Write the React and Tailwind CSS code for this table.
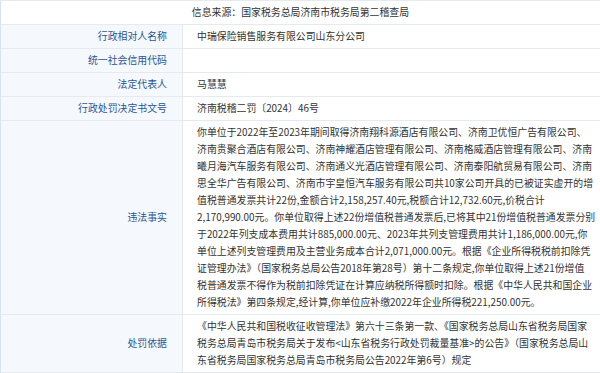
import React from 'react';

const facts = [
  '你单位于2022年至2023年期间取得济南翔科源酒店有限公司、济南卫优恒广告有限公司、',
  '济南贵聚合酒店有限公司、济南神耀酒店管理有限公司、济南格威酒店管理有限公司、济南',
  '曦月海汽车服务有限公司、济南通义光酒店管理有限公司、济南泰阳航贸易有限公司、济南',
  '思全华广告有限公司、济南市宇皇恒汽车服务有限公司共10家公司开具的已被证实虚开的增',
  '值税普通发票共计22份,金额合计2,158,257.40元,税额合计12,732.60元,价税合计',
  '2,170,990.00元。你单位取得上述22份增值税普通发票后,已将其中21份增值税普通发票分别',
  '于2022年列支成本费用共计885,000.00元、2023年共列支管理费用共计1,186,000.00元,你',
  '单位上述列支管理费用及主营业务成本合计2,071,000.00元。根据《企业所得税税前扣除凭',
  '证管理办法》（国家税务总局公告2018年第28号）第十二条规定,你单位取得上述21份增值',
  '税普通发票不得作为税前扣除凭证在计算应纳税所得额时扣除。根据《中华人民共和国企业',
  '所得税法》第四条规定,经计算,你单位应补缴2022年企业所得税221,250.00元。',
];

const basis = [
  '《中华人民共和国税收征收管理法》第六十三条第一款、《国家税务总局山东省税务局国家',
  '税务总局青岛市税务局关于发布<山东省税务行政处罚裁量基准>的公告》（国家税务总局山',
  '东省税务局国家税务总局青岛市税务局公告2022年第6号）规定',
];

const rows = [
  { label: '行政相对人名称', lines: ['中瑞保险销售服务有限公司山东分公司'] },
  { label: '统一社会信用代码', lines: [''] },
  { label: '法定代表人', lines: ['马慧慧'] },
  { label: '行政处罚决定书文号', lines: ['济南税稽二罚〔2024〕46号'] },
  { label: '违法事实', lines: facts },
  { label: '处罚依据', lines: basis },
];

function Row({ label, lines }) {
  return (
    <div className="flex border-b border-[#e6e9ee]">
      <div className="w-[182px] shrink-0 bg-[#f5f8fc] border-r border-[#e6e9ee] flex items-center justify-end pr-[15px] text-[#2a5592]">
        {label}
      </div>
      <div className="flex-1 pl-[14px] py-[3px] text-[#333]">
        {lines.map((l, i) => (
          <div key={i} className="whitespace-nowrap h-[17px]">{l}</div>
        ))}
      </div>
    </div>
  );
}

export default function App() {
  return (
    <div
      className="w-[600px] h-[373px] bg-white overflow-hidden text-[9.9px] leading-[17px]"
      style={{ fontFamily: '"Noto Sans CJK SC", "Noto Sans", sans-serif' }}
    >
      <div className="border-l border-[#d5e3f3] border-t border-t-[#e6e9ee]">
        <div className="border-b border-[#e6e9ee] py-[3px] text-center text-[#333]">
          信息来源：国家税务总局济南市税务局第二稽查局
        </div>
        {rows.map(r => (
          <Row key={r.label} {...r} />
        ))}
      </div>
    </div>
  );
}
